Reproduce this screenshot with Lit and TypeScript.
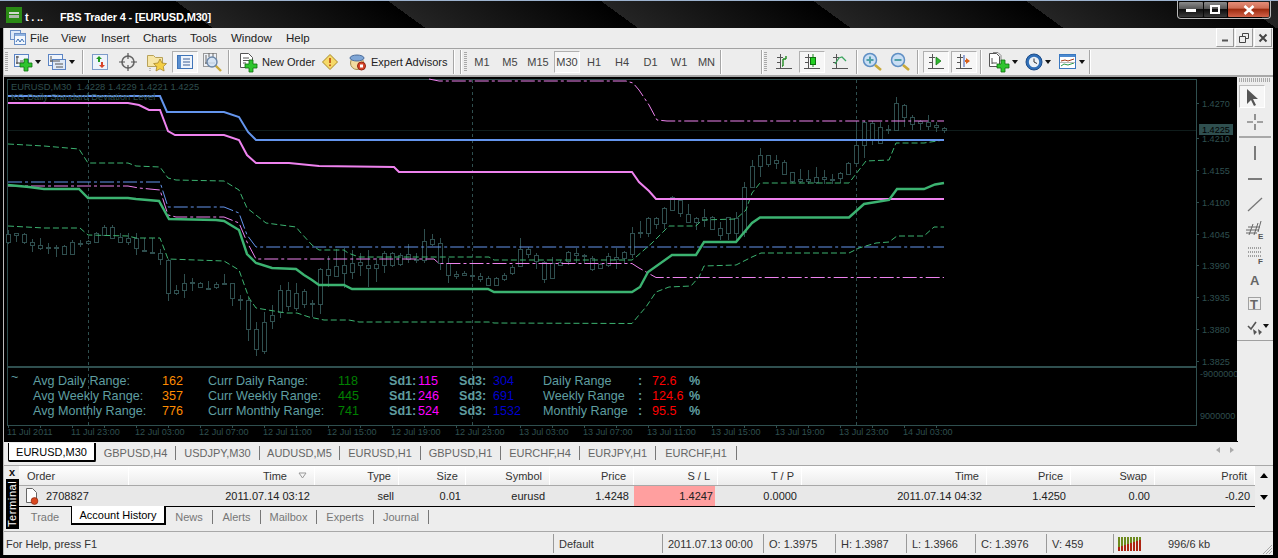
import { LitElement, html, css, svg } from "lit";
import { customElement } from "lit/decorators.js";

const C = "#2f4f4f";
// candle data in zoom units: [bodyTop, bodyBottom, wickTop, wickBottom]
const Z1: number[][] = [
[43,67,30,73],[40,46,38,65],[43,67,40,73],[67,77,57,95],[75,83,55,90],[80,82,70,102],[80,82,75,110],[78,102,76,105],[65,102,60,105],[68,70,60,80],
[62,68,60,70],[40,66,35,66],[20,44,14,48],[22,56,14,56],[52,68,38,68],[55,68,40,75],[55,85,40,105],[90,92,55,95],[97,99,55,101],[100,118,88,135],
[120,220,118,242],[210,220,195,224],[188,210,163,233],[186,188,175,212],[188,200,185,205],[203,205,183,205],[193,203,185,206],[190,192,163,195],[190,235,188,258],[236,238,225,270],
[241,328,235,362],[328,388,305,408],[305,392,275,402],[284,301,255,326],[211,278,195,293],[211,260,186,272],[218,263,190,272],[214,253,208,265],[248,250,240,290],[148,253,145,282],
[148,167,108,200],[138,167,88,170],[135,158,85,205],[130,158,90,178],[126,134,100,168],[136,146,90,200],[133,146,113,186],[100,136,92,158],[100,136,95,140],[106,134,100,138],
[103,118,72,130],[118,120,98,128],[62,120,27,128],[58,74,42,78],[70,130,55,150],[130,166,113,190],[161,167,152,176],[158,164,152,168],[164,166,120,180],[167,175,160,186],
[175,196,168,198],[175,196,170,198],[164,176,158,182],[141,160,135,164],[88,139,55,140],[88,103,80,115],[106,123,100,147],[125,176,122,188],[128,173,112,175],[125,133,120,137],
[97,125,92,136],[100,106,85,130],[106,108,102,133],[113,146,108,152],[133,146,128,146],[107,133,100,142],[110,116,83,147],[97,116,92,132]];
const Z2: number[][] = [
[458,520,440,535],[457,459,423,475],[415,460,410,470],[415,433,410,447],[385,430,380,447],[350,388,348,390],[360,400,358,410],[403,428,372,430],[415,428,410,450],[410,418,388,440],
[410,445,408,450],[443,463,425,480],[412,460,410,480],[415,460,395,480],[322,458,307,470],[258,322,240,325],[226,258,205,290],[226,254,224,262],[241,250,224,268],[245,281,240,283],
[277,303,275,310],[296,302,267,310],[296,302,270,312],[290,304,262,312],[290,297,270,312],[296,298,282,312],[278,293,276,308],[248,281,246,282],[195,250,122,255],[127,196,122,235],
[130,180,122,195],[142,190,126,192],[146,148,135,162],[70,150,52,152],[75,110,72,140],[110,130,104,150],[122,127,120,150],[125,137,105,150],[136,143,125,155],[145,151,140,158]];
const candles = [
  ...Z1.map((c) => c.map((v) => 220 + v / 3)),
  ...Z2.map((c) => c.map((v) => 80 + v / 3)),
];

const P = (s: string) => s;
const blueSolid = P("9,96 161,96 168,112 225,112 240,117 249,132 257,140 945,140");
const violetSolid = P("9,103 129,103 140,105 150,110 161,110 169,131 176,135 225,135 240,140 248,155 257,163 290,163 320,166 395,167 400,172 633,172 640,182 650,191 657,199 945,199");
const greenSolid = P("9,185 30,187 45,189 80,189 89,198 129,198 137,199 160,201 170,219 217,220 225,221 240,230 248,254 257,263 273,268 297,269 305,275 313,280 320,285 345,285 353,289 489,289 495,292 633,292 641,287 649,272 673,255 697,255 705,242 737,242 753,223 761,217.5 850,217.5 865,204 890,200 898,189 925,189 936,184.5 945,183");
const violetTop = P("430,79 440,81 627,81 634,83 640,90 650,105 658,120 668,121 945,121");
const blueDash = P("9,182 161,182 169,207 225,207 240,213 248,235 257,247 945,247");
const violetDash = P("9,186 129,186 140,188 161,190 169,215 177,217 225,217 240,223 248,242 257,259 435,259 440,263.5 633,263.5 640,268 657,277.5 945,277.5");
const greenUp = P("9,144 45,146 80,149 89,163 129,163 137,166 161,167 169,178 177,180 225,181 240,190 248,208 267,223 297,227 302,233 313,245 320,250 345,250 349,253 360,257 490,257 495,260 633,260 637,257 653,243 670,226 697,226 703,220 737,219 747,210 753,193 761,183 850,183 860,170 867,161 890,160 897,143 925,143 945,140");
const greenLow = P("9,226 45,228 81,228 89,235 129,236 137,238 161,238 169,259 225,261 240,270 250,298 257,308 287,313 298,313 310,317 325,320 350,320 360,322 490,322 495,323 633,323.5 640,315 647,307 657,292 670,287 692,286 700,277 705,266 737,265 753,257 762,253 850,253 860,248 877,243 890,242 898,236 925,236 935,227 945,227");

const prices: [string, number][] = [["1.4270",103],["1.4210",138],["1.4155",170],["1.4100",202],["1.4045",234],["1.3990",265],["1.3935",297],["1.3880",329],["1.3825",361]];
const times = ["11 Jul 2011","11 Jul 23:00","12 Jul 03:00","12 Jul 07:00","12 Jul 11:00","12 Jul 15:00","12 Jul 19:00","12 Jul 23:00","13 Jul 03:00","13 Jul 07:00","13 Jul 11:00","13 Jul 15:00","13 Jul 19:00","13 Jul 23:00","14 Jul 03:00"];
type Cell = [number, string, string];
const panelRows: { y: number; cells: Cell[] }[] = [
  { y: 385, cells: [[34,"lab","Avg Daily Range:"],[163,"or","162"],[209,"lab","Curr Daily Range:"],[339,"gr","118"],[390,"bd","Sd1:"],[419,"mg","115"],[460,"bd","Sd3:"],[494,"bl","304"],[544,"lab","Daily Range"],[639,"bd",":"],[653,"rd","72.6"],[690,"bd","%"]] },
  { y: 400, cells: [[34,"lab","Avg Weekly Range:"],[163,"or","357"],[209,"lab","Curr Weekly Range:"],[339,"gr","445"],[390,"bd","Sd1:"],[419,"mg","246"],[460,"bd","Sd3:"],[494,"bl","691"],[544,"lab","Weekly Range"],[639,"bd",":"],[653,"rd","124.6"],[690,"bd","%"]] },
  { y: 415, cells: [[34,"lab","Avg Monthly Range:"],[163,"or","776"],[209,"lab","Curr Monthly Range:"],[339,"gr","741"],[390,"bd","Sd1:"],[419,"mg","524"],[460,"bd","Sd3:"],[494,"bl","1532"],[544,"lab","Monthly Range"],[639,"bd",":"],[653,"rd","95.5"],[690,"bd","%"]] },
];

const plus = (x: number, y: number, r = 2, a = 6) => svg`<path d="M${x - r} ${y - a}h${2 * r}v${a - r}h${a - r}v${2 * r}h${-(a - r)}v${a - r}h${-2 * r}v${-(a - r)}h${-(a - r)}v${-2 * r}h${a - r}z" fill="#2ec52e" stroke="#0f6f0f" stroke-width=".8"/>`;
const ic = (w: number, h: number, body: unknown) => html`<svg class="ico" width=${w} height=${h} viewBox="0 0 ${w} ${h}">${body}</svg>`;
const axes = (extra: unknown) => ic(18, 18, svg`<path d="M5 1v15M1 15h16M2 4h6M2 9h3" stroke="#555" fill="none" shape-rendering="crispEdges"/>${extra}`);

const icons: Record<string, () => unknown> = {
  newChart: () => ic(20, 20, svg`<rect x="1.5" y="2.5" width="14" height="12" fill="#f0f5fc" stroke="#5b84c4"/><path d="M4 4v8M3 11h10M3 5h3M7 9h3" stroke="#444" fill="none"/>${plus(13, 13)}`),
  profile: () => ic(20, 20, svg`<rect x="1.5" y="2.5" width="14" height="11" fill="#f0f5fc" stroke="#5b84c4"/><rect x="5.5" y="7.5" width="13" height="10" fill="#dfe9f7" stroke="#5b84c4"/><path d="M4 4v6M3 9h10M8 12h8M9 15h7" stroke="#555" fill="none"/>`),
  market: () => ic(18, 18, svg`<rect x="1.5" y="1.5" width="15" height="15" fill="#eef3fb" stroke="#7d9bc9"/><path d="M8 3l3 3H9v3H7V6H5z" fill="#1f9a1f"/><path d="M11 15l-3-3h2V9h2v3h2z" fill="#d8432a"/>`),
  cross: () => ic(20, 20, svg`<circle cx="10" cy="10" r="6" fill="none" stroke="#666" stroke-width="1.6"/><path d="M10 1v6M10 13v6M1 10h6M13 10h6" stroke="#555" stroke-width="1.2"/>`),
  fav: () => ic(22, 20, svg`<path d="M1.5 3.5h6l2 2h7v9h-15z" fill="#f7e6a6" stroke="#b8a25a"/><path d="M14 7l2 4 4.5.6-3.2 3 .8 4.4-4.1-2.2-4 2.2.8-4.4-3.2-3 4.4-.6z" fill="#f4cf45" stroke="#a9862a" stroke-width=".8"/><path d="M4 16v3" stroke="#888" stroke-dasharray="1 1"/>`),
  nav: () => ic(18, 18, svg`<rect x="1.5" y="2.5" width="15" height="13" fill="#eef4fc" stroke="#3f74b8"/><rect x="2" y="3" width="3" height="12" fill="#5a8fd0"/><path d="M7 6h7M7 9h7M7 12h7" stroke="#3c5f95"/>`),
  tester: () => ic(22, 20, svg`<rect x="1.5" y="1.5" width="13" height="13" fill="#eef1f6" stroke="#999"/><path d="M4 3v9M3 11h10M7 1v4M11 1v4" stroke="#666"/><circle cx="10" cy="10" r="5" fill="#cfe1f4" fill-opacity=".8" stroke="#6c87a8" stroke-width="1.4"/><path d="M14 14l5 5" stroke="#c9a93a" stroke-width="2.4"/>`),
  order: () => ic(20, 20, svg`<path d="M2.5 1.5h8l4 4v10h-12z" fill="#fff" stroke="#555"/><path d="M5 6h6M5 8.5h6M5 11h3" stroke="#555"/>${plus(13, 14)}`),
  diamond: () => ic(16, 16, svg`<path d="M8 .5L15.5 8 8 15.5.5 8z" fill="#f6d968" stroke="#a98a25"/><path d="M8 4v5" stroke="#c2571a" stroke-width="1.8"/><circle cx="8" cy="11.3" r="1" fill="#c2571a"/>`),
  ea: () => ic(18, 18, svg`<circle cx="8" cy="10" r="6.5" fill="#f3dca0" stroke="#a58b4a"/><ellipse cx="8" cy="5" rx="7" ry="3" fill="#7fa6d6" stroke="#4a6c9c"/><circle cx="12.5" cy="13" r="4" fill="#d8452a" stroke="#8f2512"/><rect x="11" y="11.5" width="3" height="3" fill="#fff"/>`),
  bars: () => axes(svg`<path d="M8 6v7M8 6h3M11 6V3M8 13h-1" stroke="#1f8a1f" stroke-width="1.4" fill="none"/>`),
  candle: () => axes(svg`<path d="M10 1v13" stroke="#1f8a1f"/><rect x="7.5" y="4.5" width="5" height="7" fill="#22d022" stroke="#106e10"/>`),
  line: () => axes(svg`<path d="M4 11l4-6 3-1 4 4" stroke="#3aa55e" stroke-width="1.3" fill="none"/>`),
  zoomIn: () => ic(22, 20, svg`<circle cx="8" cy="8" r="6.5" fill="#c9def4" stroke="#5f8fc4" stroke-width="1.5"/><path d="M8 4.5v7M4.5 8h7" stroke="#4fa0a8" stroke-width="2"/><path d="M13 13l6 5" stroke="#c9a93a" stroke-width="2.6"/>`),
  zoomOut: () => ic(22, 20, svg`<circle cx="8" cy="8" r="6.5" fill="#c9def4" stroke="#5f8fc4" stroke-width="1.5"/><path d="M4.5 8h7" stroke="#4fa0a8" stroke-width="2"/><path d="M13 13l6 5" stroke="#c9a93a" stroke-width="2.6"/>`),
  shift: () => axes(svg`<path d="M9 4l5 4-5 4z" fill="#2eb82e" stroke="#116e11" stroke-width=".7"/>`),
  auto: () => axes(svg`<path d="M9 2v12" stroke="#3656b4"/><path d="M15 8l-4-3v2h-1v2h1v2z" fill="#d8601a"/>`),
  addInd: () => ic(22, 22, svg`<path d="M1.5 2.5h7l3 3v10h-10z" fill="#fff" stroke="#555"/><path d="M4 7v6M4 12h5" stroke="#555"/><path d="M5 1.5h5l3 3v6" fill="none" stroke="#888"/>${plus(15, 15)}`),
  clock: () => ic(18, 18, svg`<circle cx="9" cy="9" r="8" fill="#2f6fb8" stroke="#1d4c88"/><circle cx="9" cy="9" r="5.2" fill="#eaf0f6"/><path d="M9 5.5V9l3 1.5" stroke="#333" fill="none"/>`),
  tmpl: () => ic(18, 16, svg`<rect x=".5" y=".5" width="16" height="14" fill="#fff" stroke="#3a78c0"/><rect x="1" y="1" width="15" height="2" fill="#4d8ad0"/><path d="M2 7l4-1 3 1 6-2" stroke="#a33a16" fill="none"/><path d="M2 12l3-2 4 1 6-2" stroke="#2d9a4c" fill="none"/><path d="M1 8.5h15" stroke="#bbb"/>`),
  menu: () => ic(18, 18, svg`<rect x="1.5" y="1.5" width="10" height="9" fill="#dce8f8" stroke="#6a8fc6"/><rect x="5.5" y="4.5" width="11" height="11" fill="#f2f7fd" stroke="#6a8fc6"/><rect x="6" y="5" width="10" height="2" fill="#8fb2e0"/><path d="M7 13l2-3 2 3 2-3 2 3" stroke="#3c6fb4" fill="none"/>`),
  doc: () => ic(16, 18, svg`<path d="M2.5 1.5h6l4 4v10h-10z" fill="#fdfdfd" stroke="#666"/><circle cx="10.5" cy="14" r="3.4" fill="#d9481f" stroke="#8a2a10" stroke-width=".7"/>`),
};

const tb: any[] = [
  { k: "sp", w: 1 }, { k: "grip" }, { k: "sp", w: 2 },
  { k: "ic", w: 34, i: "newChart", a: 1 }, { k: "ic", w: 34, i: "profile", a: 1 }, { k: "sp", w: 4 }, { k: "sep" }, { k: "sp", w: 2 },
  { k: "ic", w: 28, i: "market" }, { k: "ic", w: 28, i: "cross" }, { k: "ic", w: 29, i: "fav" }, { k: "sp", w: 1 }, { k: "ic", w: 26, i: "nav", on: 1 }, { k: "ic", w: 29, i: "tester" }, { k: "sp", w: 1 }, { k: "sep" }, { k: "sp", w: 3 },
  { k: "lb", w: 83, p: 5, i: "order", t: "New Order" }, { k: "ic", w: 27, i: "diamond" }, { k: "lb", w: 108, p: 6, i: "ea", t: "Expert Advisors" }, { k: "sp", w: 2 }, { k: "sep" }, { k: "sp", w: 5 }, { k: "sep" }, { k: "sp", w: 2 }, { k: "grip" }, { k: "sp", w: 1 },
  { k: "tf", w: 28, t: "M1" }, { k: "tf", w: 28, t: "M5" }, { k: "tf", w: 28, t: "M15" }, { k: "sp", w: 2 }, { k: "tf", w: 26, t: "M30", on: 1 }, { k: "tf", w: 28, t: "H1" }, { k: "tf", w: 28, t: "H4" }, { k: "tf", w: 29, t: "D1" }, { k: "tf", w: 28, t: "W1" }, { k: "tf", w: 27, t: "MN" }, { k: "sep" }, { k: "sp", w: 39 }, { k: "sep" }, { k: "sp", w: 1 }, { k: "grip" }, { k: "sp", w: 3 },
  { k: "ic", w: 28, i: "bars" }, { k: "sp", w: 1 }, { k: "ic", w: 26, i: "candle", on: 1 }, { k: "sp", w: 1 }, { k: "ic", w: 28, i: "line" }, { k: "sp", w: 2 }, { k: "sep" }, { k: "sp", w: 1 },
  { k: "ic", w: 28, i: "zoomIn" }, { k: "ic", w: 28, i: "zoomOut" }, { k: "sp", w: 2 }, { k: "sep" }, { k: "sp", w: 4 }, { k: "ic", w: 26, i: "shift", on: 1 }, { k: "sp", w: 2 }, { k: "ic", w: 26, i: "auto", on: 1 }, { k: "sp", w: 3 }, { k: "sep" }, { k: "sp", w: 3 },
  { k: "ic", w: 35, i: "addInd", a: 1 }, { k: "ic", w: 36, i: "clock", a: 1 }, { k: "ic", w: 32, i: "tmpl", a: 1 }, { k: "sp", w: 1 }, { k: "sep" },
];

const menu: [string, number][] = [["File", 31], ["View", 40], ["Insert", 42], ["Charts", 47], ["Tools", 41], ["Window", 55], ["Help", 40]];
const tabs: [string, number][] = [["GBPUSD,H4", 80], ["USDJPY,M30", 84], ["AUDUSD,M5", 80], ["EURUSD,H1", 81], ["GBPUSD,H1", 80], ["EURCHF,H4", 79], ["EURJPY,H1", 76], ["EURCHF,H1", 81]];
const ttabs: [string, number, boolean?][] = [["Trade", 52], ["Account History", 95, true], ["News", 47], ["Alerts", 48], ["Mailbox", 56], ["Experts", 57], ["Journal", 55]];
const colW = [110, 186, 84, 67, 84, 84, 84, 84, 185, 84, 84, 100];
const head = ["Order", "Time", "Type", "Size", "Symbol", "Price", "S / L", "T / P", "Time", "Price", "Swap", "Profit"];
const vals = ["2708827", "2011.07.14 03:12", "sell", "0.01", "eurusd", "1.4248", "1.4247", "0.0000", "2011.07.14 04:32", "1.4250", "0.00", "-0.20"];
const status: [string, number][] = [["Default", 109], ["2011.07.13 00:00", 101], ["O: 1.3975", 72], ["H: 1.3987", 71], ["L: 1.3966", 69], ["C: 1.3976", 71], ["V: 459", 67]];

const side: any[] = [
  { h: 23, on: 1, b: svg`<path d="M5 2v15l4-4 3 6 2-1-3-6h5z" fill="#555"/>` },
  { h: 28, b: svg`<path d="M10 2v6M10 12v6M2 10h6M12 10h6" stroke="#555" stroke-width="1.2"/>` },
  { h: 2, sep: 1 },
  { h: 29, b: svg`<path d="M10 3v14" stroke="#555" stroke-width="1.5"/>` },
  { h: 24, b: svg`<path d="M3 10h14" stroke="#555" stroke-width="1.5"/>` },
  { h: 25, b: svg`<path d="M3 17L17 4" stroke="#777" stroke-width="1.3"/>` },
  { h: 25, b: svg`<path d="M1 11h13M1 14h11M3 8h12M4 16l4-11M9 16l4-12M13 13l3-11" stroke="#666" fill="none"/><text class="st" x="13" y="20">E</text>` },
  { h: 26, b: svg`<path d="M3 4h14M3 8h14M3 12h14" stroke="#555" stroke-dasharray="1 1"/><text class="st" x="13" y="20">F</text>` },
  { h: 25, b: svg`<text class="sa" x="5" y="15">A</text>` },
  { h: 24, b: svg`<rect x="3.5" y="3.5" width="12" height="12" fill="none" stroke="#555" stroke-dasharray="1 1"/><text class="sa" x="5" y="14.5">T</text>` },
  { h: 24, b: svg`<path d="M3 8l3 3 5-7" stroke="#555" stroke-width="1.6" fill="none"/><path d="M8 11l4 3-3 3M13 11l4 3-3 3z" fill="#555"/>`, a: 1 },
];

@customElement("app-root")
export class AppRoot extends LitElement {
  static styles = css`
    :host { display: block; width: 1278px; height: 558px; overflow: hidden; font: 11px "Liberation Sans", Arial, sans-serif; color: #333; }
    .win { width: 1278px; height: 558px; background: #000; display: flex; flex-direction: column; border-top: 1px solid #9db3cf; box-sizing: border-box; }
    .title { height: 27px; flex: none; display: flex; align-items: flex-start; background: repeating-linear-gradient(36deg, #242424 0, #000 125px); color: #fff; font-weight: bold; font-size: 11px; letter-spacing: -.18px; }
    .logo { width: 16px; height: 16px; margin: 6px 0 0 6px; background: #2a8a14; display: flex; align-items: center; justify-content: center; }
    .logo i { width: 10px; height: 6px; background: linear-gradient(#cfd8cc 0 2px, #2a8a14 2px 3px, #aeb8ac 3px); }
    .redact { width: 38px; margin-top: 9px; padding-left: 3px; box-sizing: border-box; height: 14px; line-height: 14px; }
    .ttext { margin-top: 9px; line-height: 14px; }
    .caption { margin: 0 7px 0 auto; display: flex; height: 18px; border: 1px solid #b9b9b9; border-top: none; border-radius: 0 0 4px 4px; padding: 1px; box-sizing: border-box; width: 94px; gap: 1px; }
    .cb { flex: 1; display: flex; align-items: center; justify-content: center; background: linear-gradient(#8b8b8b, #555 45%, #0e0e0e 50%, #3a3a3a); border-radius: 1px; }
    .cb.x { flex: none; width: 41px; background: linear-gradient(#e58d78, #cf6e55 40%, #9e2c10 50%, #d2634a); }
    .panel { flex: 1; min-height: 0; margin: 0 5px 3px 3px; background: #ededed; display: flex; flex-direction: column; border-left: 1px solid #bbb; }
    .menubar { height: 20px; flex: none; display: flex; align-items: center; }
    .micon { width: 26px; padding-left: 5px; box-sizing: border-box; display: flex; }
    .mi { font-size: 11.5px; color: #222; }
    .mdi { margin: 0 1px 0 auto; display: flex; gap: 1px; align-self: flex-start; }
    .mb { width: 16px; height: 17px; border: 1px solid #a8a8a8; border-color: #fff #999 #999 #fff; display: flex; align-items: center; justify-content: center; }
    .rule { height: 1px; background: #a2a2a2; flex: none; }
    .toolbar { height: 26px; flex: none; display: flex; align-items: center; font-size: 11px; color: #444; }
    .sep { width: 1px; height: 24px; background: #a6a6a6; border-right: 1px solid #fff; flex: none; }
    .grip { width: 3px; height: 20px; flex: none; background: repeating-linear-gradient(#a8a8a8 0 1px, transparent 1px 2px); }
    .it { height: 22px; flex: none; display: flex; align-items: center; justify-content: center; gap: 2px; box-sizing: border-box; }
    .it.lb { justify-content: flex-start; gap: 4px; color: #222; }
    .it.on { border: 1px solid; border-color: #b0b0b0 #fff #fff #b0b0b0; background: #f6f6f6; }
    .ico { display: block; flex: none; overflow: visible; }
    .tri { width: 0; height: 0; border: 3.5px solid transparent; border-top: 4px solid #111; border-bottom: none; flex: none; }
    .mid { flex: none; height: 364px; display: flex; border-top: 2px solid #a8a8a8; box-sizing: content-box; }
    .chart { width: 1233px; height: 364px; background: #000; display: block; flex: none; }
    .sidebar { flex: 1; display: flex; flex-direction: column; align-items: stretch; }
    .sgrip { height: 8px; flex: none; margin: 0 2px; background: repeating-linear-gradient(90deg, #a8a8a8 0 1px, transparent 1px 2px) 0 1px / 100% 4px no-repeat; }
    .si { flex: none; display: flex; align-items: center; justify-content: center; position: relative; }
    .si.on { width: 26px; margin-left: 2px; border: 1px solid; border-color: #bdbdbd #fff #fff #bdbdbd; background: #f6f6f6; box-sizing: border-box; }
    .si .tri { margin-left: 1px; position: absolute; right: 4px; top: 8px; }
    .ssep { flex: none; background: #a8a8a8; height: 2px; margin: 0 2px; }
    .send { flex: none; height: 1px; margin-top: 0; background: #a0a0a0; }
    .st { font: bold 8px "Liberation Sans", sans-serif; fill: #555; }
    .sa { font: bold 13px "Liberation Sans", sans-serif; fill: #666; }
    .tabs { height: 22px; flex: none; display: flex; align-items: center; border-top: 1px solid #000; box-sizing: border-box; color: #666; margin-right: 35px; position: relative; background: #ededed; }
    .tabsrow { display: flex; flex: none; height: 24px; position: relative; border-bottom: 2px solid #f6f6f6; box-sizing: border-box; }
    .tab0 { margin-left: 4px; width: 88px; height: 19px; flex: none; background: #fff; color: #000; border: 1px solid #000; border-top: none; border-right-width: 2px; border-bottom-width: 2px; box-sizing: border-box; display: flex; align-items: center; justify-content: center; border-radius: 0 0 2px 2px; }
    .tab { height: 14px; flex: none; border-right: 1px solid #777; display: flex; align-items: center; justify-content: center; box-sizing: border-box; }
    .tarrows { position: absolute; right: 4px; top: 5px; display: flex; gap: 10px; }
    .la { border: 3.5px solid transparent; border-right: 4px solid #aaa; border-left: none; }
    .ra { border: 3.5px solid transparent; border-left: 4px solid #aaa; border-right: none; }
    .term { flex: none; height: 65px; display: flex; margin-top: 2px; border-top: 1px solid #a8a8a8; }
    .tleft { width: 14px; flex: none; margin-left: 1px; display: flex; flex-direction: column; align-items: center; }
    .tx { font: bold 11px "Liberation Sans", sans-serif; color: #111; height: 13px; line-height: 12px; }
    .tlabel { width: 13px; height: 50px; background: #000; color: #fff; writing-mode: vertical-rl; transform: rotate(180deg); font-size: 11px; text-align: center; letter-spacing: .6px; line-height: 13px; }
    .tmain { flex: 1; display: flex; flex-direction: column; min-width: 0; }
    .grid { display: flex; align-items: stretch; }
    .hd { height: 19px; background: linear-gradient(#fff, #ececec); border-bottom: 1px solid #a8a8a8; }
    .rw { height: 20px; background: #e8e8e8; border-bottom: 1px solid #000; flex: none; box-sizing: content-box; margin-right: 0; }
    .hc { flex: none; display: flex; align-items: center; justify-content: flex-end; padding-right: 7px; box-sizing: border-box; border-right: 1px solid #fff; color: #333; position: relative; }
    .hc.first { justify-content: flex-start; padding-left: 8px; }
    .hc.sort { padding-right: 27px; }
    .sortm { position: absolute; right: 7px; top: 6px; }
    .dc { flex: none; display: flex; align-items: center; justify-content: flex-end; padding-right: 5px; box-sizing: border-box; color: #222; }
    .dc.first { justify-content: flex-start; padding-left: 5px; gap: 6px; }
    .dc.sl { background: #ff9f9f; margin-right: 3px; padding-right: 2px; }
    .sb { width: 18px; flex: none; display: flex; flex-direction: column; align-items: center; justify-content: space-between; background: #ededed; padding: 7px 0 6px; box-sizing: border-box; height: 40px; }
    .up { border: 4px solid transparent; border-bottom: 5px solid #000; border-top: none; }
    .dn { border: 4px solid transparent; border-top: 5px solid #000; border-bottom: none; }
    .tt { display: flex; height: 19px; color: #777; align-items: center; flex: none; }
    .ttab { height: 14px; flex: none; border-right: 1px solid #777; display: flex; align-items: center; justify-content: center; box-sizing: border-box; }
    .ttab.plain { border-right: none; }
    .ttab.on { height: 19px; background: #fff; color: #000; border: 1px solid #000; border-top: none; border-bottom-width: 2px; border-right-width: 2px; margin-top: -1px; align-self: flex-start; }
    .statusb { flex: 1; display: flex; align-items: center; color: #333; border-top: 1px solid #a8a8a8; position: relative; font-size: 11px; }
    .s0 { width: 549px; flex: none; padding-left: 2px; box-sizing: border-box; }
    .sc { height: 19px; flex: none; border-left: 1px solid #999; padding-left: 5px; box-sizing: border-box; display: flex; align-items: center; }
    .sbar { padding-left: 4px; width: 50px; }
    .skb { padding-left: 5px; }
    .corner { position: absolute; right: 0; bottom: 0; }
    .ln { fill: none; shape-rendering: geometricPrecision; }
    .ax { font: 9.1px "Liberation Sans", sans-serif; fill: #2f4f4f; }
    .hdr { font: 9.4px "Liberation Sans", sans-serif; fill: #2f4f4f; }
    .bl0 { font: 9.1px "Liberation Sans", sans-serif; fill: #000; }
    .lab { font: 12.6px "Liberation Sans", sans-serif; fill: #5f9ea0; }
    .bd { font: bold 12.6px "Liberation Sans", sans-serif; fill: #5f9ea0; }
    .or { font: 12.6px "Liberation Sans", sans-serif; fill: #ff8c00; }
    .gr { font: 12.6px "Liberation Sans", sans-serif; fill: #008000; }
    .mg { font: 12.6px "Liberation Sans", sans-serif; fill: #ff00ff; }
    .bl { font: 12.6px "Liberation Sans", sans-serif; fill: #0000cd; }
    .rd { font: 12.6px "Liberation Sans", sans-serif; fill: #ff0000; }
  `;

  chart() {
    const line = (pts: string, color: string, w: number, dash = "") =>
      svg`<polyline class="ln" points=${pts} stroke=${color} stroke-width=${w} stroke-dasharray=${dash}></polyline>`;
    return html`<svg class="chart" viewBox="5 77 1233 364">
      <path d="M9 130.5H1197" stroke="#0f1c1b" shape-rendering="crispEdges"/>
      <path d="M89.5 80V425M473.5 80V425M857.5 80V425" stroke=${C} stroke-dasharray="3 3" shape-rendering="crispEdges"/>
      <rect x="8.5" y="79.5" width="1189" height="286.5" fill="none" stroke=${C} shape-rendering="crispEdges"/>
      <rect x="8.5" y="367.5" width="1189" height="57.5" fill="none" stroke=${C} shape-rendering="crispEdges"/>
      ${candles.map((c, n) => {
        const x = 9.5 + 8 * n;
        const doji = c[1] - c[0] < 1;
        return svg`<path d="M${x} ${c[2]}V${c[3]}" stroke=${C} shape-rendering="crispEdges"/>
          <rect x=${x - 2} y=${Math.round(c[0]) + 0.5} width="4" height=${Math.max(1, Math.round(c[1] - c[0]))} fill=${doji ? C : "#000"} stroke=${C} shape-rendering="crispEdges"/>`;
      })}
      ${line(violetTop, "#ee82ee", 1, "14 3 3 3")}
      ${line(blueDash, "#6495ed", 1, "14 3 3 3")}
      ${line(violetDash, "#ee82ee", 1, "14 3 3 3")}
      ${line(greenUp, "#3cb371", 1, "6 3")}
      ${line(greenLow, "#3cb371", 1, "6 3")}
      ${line(blueSolid, "#6495ed", 2)}
      ${line(violetSolid, "#ee82ee", 2)}
      ${line(greenSolid, "#3cb371", 2.4)}
      <text class="hdr" x="12" y="90" xml:space="preserve">EURUSD,M30  1.4228 1.4229 1.4221 1.4225</text>
      <text class="hdr" x="12" y="100">KG Daily Standard Deviation Level</text>
      ${prices.map(([t, y]) => svg`<path d="M1197 ${y + 0.5}h3" stroke=${C}/><text class="ax" x="1203" y=${y + 3.5}>${t}</text>`)}
      <rect x="1200" y="124" width="34" height="11" fill=${C}/>
      <text class="bl0" x="1203" y="133">1.4225</text>
      <text class="ax" x="1201" y="377">-9000000</text>
      <text class="ax" x="1201" y="419">9000000</text>
      ${panelRows.map((r) => r.cells.map(([x, c, t]) => svg`<text class=${c} x=${x} y=${r.y}>${t}</text>`))}
      <text class="lab" x="12" y="381">~</text>
      ${Array.from({ length: 30 }, (_, i) => svg`<path d="M${9.5 + 32 * i} 425v3" stroke=${C}/>`)}
      ${times.map((t, i) => svg`<text class="ax" x=${8 + 64 * i} y="435">${t}</text>`)}
    </svg>`;
  }

  tbItem(t: any) {
    if (t.k === "sep") return html`<div class="sep"></div>`;
    if (t.k === "grip") return html`<div class="grip"></div>`;
    const w = `width:${t.w}px`;
    if (t.k === "sp") return html`<div style=${w} class="it"></div>`;
    if (t.k === "tf") return html`<div style=${w} class="it ${t.on ? "on" : ""}">${t.t}</div>`;
    if (t.k === "lb") return html`<div style="${w};padding-left:${t.p}px" class="it lb">${icons[t.i]()}<span>${t.t}</span></div>`;
    return html`<div style=${w} class="it ${t.on ? "on" : ""}">${icons[t.i]()}${t.a ? html`<span class="tri"></span>` : ""}</div>`;
  }

  render() {
    return html`<div class="win">
      <div class="title">
        <div class="logo"><i></i></div>
        <div class="redact">t .   ..</div>
        <div class="ttext">FBS Trader 4 - [EURUSD,M30]</div>
        <div class="caption">
          <div class="cb"><svg width="10" height="4"><rect width="10" height="3" y="1" fill="#fff"/></svg></div>
          <div class="cb"><svg width="10" height="9"><rect x="1" y="1" width="8" height="7" fill="none" stroke="#fff" stroke-width="2"/></svg></div>
          <div class="cb x"><svg width="12" height="10"><path d="M1.5 1l9 8M10.5 1l-9 8" stroke="#fff" stroke-width="2.6"/></svg></div>
        </div>
      </div>
      <div class="panel">
        <div class="menubar">
          <div class="micon">${icons.menu()}</div>
          ${menu.map(([m, w]) => html`<div class="mi" style="width:${w}px">${m}</div>`)}
          <div class="mdi">
            <div class="mb"><svg width="8" height="8"><path d="M1 6.5h6" stroke="#555" stroke-width="2"/></svg></div>
            <div class="mb"><svg width="10" height="10"><path d="M3.5 3V.5h6v5H7M.5 3.5h6v6h-6z" fill="none" stroke="#444"/></svg></div>
            <div class="mb"><svg width="10" height="10"><path d="M1.5 1.5l7 7M8.5 1.5l-7 7" stroke="#444" stroke-width="2"/></svg></div>
          </div>
        </div>
        <div class="rule"></div>
        <div class="toolbar">${tb.map((t) => this.tbItem(t))}</div>
        <div class="mid">
          ${this.chart()}
          <div class="sidebar">
            <div class="sgrip"></div>
            ${side.map((s) => s.sep ? html`<div class="ssep"></div>` : html`<div class="si ${s.on ? "on" : ""}" style="height:${s.h}px"><svg class="ico" width="20" height="20">${s.b}</svg>${s.a ? html`<span class="tri"></span>` : ""}</div>`)}
            <div class="send"></div>
          </div>
        </div>
        <div class="tabs">
          <div class="tab0">EURUSD,M30</div>
          ${tabs.map(([t, w]) => html`<div class="tab" style="width:${w}px">${t}</div>`)}
          <div class="tarrows"><span class="la"></span><span class="ra"></span></div>
        </div>
        <div class="term">
          <div class="tleft"><div class="tx">x</div><div class="tlabel">Terminal</div></div>
          <div class="tmain">
            <div class="grid">
              <div>
                <div class="grid hd">${head.map((h, i) => html`<div class="hc ${i === 0 ? "first" : ""} ${i === 1 ? "sort" : ""}" style="width:${colW[i]}px">${h}${i === 1 ? html`<svg class="sortm" width="9" height="7"><path d="M1 1h7L4.5 6z" fill="none" stroke="#999"/></svg>` : ""}</div>`)}</div>
                <div class="grid rw">${vals.map((v, i) => html`<div class="dc ${i === 0 ? "first" : ""} ${i === 6 ? "sl" : ""}" style="width:${i === 6 ? colW[i] - 3 : colW[i]}px">${i === 0 ? icons.doc() : ""}<span>${v}</span></div>`)}</div>
              </div>
              <div class="sb"><span class="up"></span><span class="dn"></span></div>
            </div>
            <div class="tt">${ttabs.map(([t, w, on]) => html`<div class="ttab ${on ? "on" : ""} ${t === "Trade" ? "plain" : ""}" style="width:${w}px">${t}</div>`)}</div>
          </div>
        </div>
        <div class="statusb">
          <div class="s0">For Help, press F1</div>
          ${status.map(([t, w]) => html`<div class="sc" style="width:${w}px">${t}</div>`)}
          <div class="sc sbar"><svg width="24" height="15">${Array.from({ length: 8 }, (_, i) => svg`<rect x=${i * 3} y="1" width="2" height=${14 - (4 + i)} fill="#6d8a1e"/><rect x=${i * 3} y=${11 - i} width="2" height=${4 + i} fill="#ad2412"/>`)}</svg></div>
          <div class="skb">996/6 kb</div>
          <svg class="corner" width="12" height="12"><path d="M11 2L2 11M11 5L5 11M11 8L8 11" stroke="#aaa"/></svg>
        </div>
      </div>
    </div>`;
  }
}
